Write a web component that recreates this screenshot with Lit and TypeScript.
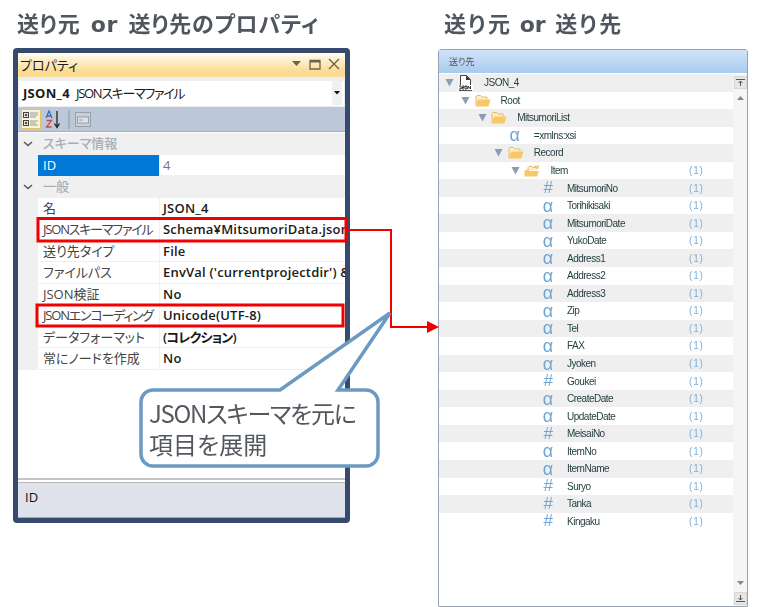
import { LitElement, html, css, svg } from "lit";
import { customElement } from "lit/decorators.js";

type Node = { name: string; level: number; kind: "json" | "folder" | "open" | "a" | "n"; count?: boolean };

const leaf = (name: string, kind: "a" | "n"): Node => ({ name, level: 5, kind, count: true });
const nodes: Node[] = [
  { name: "JSON_4", level: 0, kind: "json" },
  { name: "Root", level: 1, kind: "folder" },
  { name: "MitsumoriList", level: 2, kind: "folder" },
  { name: "=xmlns:xsi", level: 3, kind: "a" },
  { name: "Record", level: 3, kind: "folder" },
  { name: "Item", level: 4, kind: "open", count: true },
  leaf("MitsumoriNo", "n"), leaf("Torihikisaki", "a"), leaf("MitsumoriDate", "a"), leaf("YukoDate", "a"),
  leaf("Address1", "a"), leaf("Address2", "a"), leaf("Address3", "a"), leaf("Zip", "a"), leaf("Tel", "a"),
  leaf("FAX", "a"), leaf("Jyoken", "a"), leaf("Goukei", "n"), leaf("CreateDate", "a"), leaf("UpdateDate", "a"),
  leaf("MeisaiNo", "n"), leaf("ItemNo", "a"), leaf("ItemName", "a"), leaf("Suryo", "n"), leaf("Tanka", "n"), leaf("Kingaku", "n"),
];

const props: { k: string; v: string; tightK?: boolean; tightV?: boolean }[] = [
  { k: "名", v: "JSON_4" },
  { k: "JSONスキーマファイル", v: "Schema¥MitsumoriData.json", tightK: true },
  { k: "送り先タイプ", v: "File" },
  { k: "ファイルパス", v: "EnvVal ('currentprojectdir') & '¥Mits" },
  { k: "JSON検証", v: "No" },
  { k: "JSONエンコーディング", v: "Unicode(UTF-8)", tightK: true },
  { k: "データフォーマット", v: "(コレクション)", tightV: true },
  { k: "常にノードを作成", v: "No" },
];

const chevron = html`<svg class="chev" width="10" height="6" viewBox="0 0 10 6"><path d="M1 1l4 3.5L9 1" fill="none" stroke="#555" stroke-width="1.5"/></svg>`;

const folder = html`<svg width="16" height="13" viewBox="0 0 16 13"><path d="M1 12V2.5L2 1.500h3.500L7 3h5v2" fill="#fbeecb" stroke="#e9b85a"/><path d="M.8 12.500L3 5.500h12.500L13.500 12.500z" fill="#f6c868"/></svg>`;
const openFolder = html`<svg width="16" height="13" viewBox="0 0 16 13"><path d="M4 7V3.500L5 2.500h3l1 1h4v2" fill="#fbeecb" stroke="#e9b85a"/><path d="M9 2l6.500-.5L14 5z" fill="#f6c868"/><path d="M.5 12.500V7l1-1h3l1 1h9.500L13 12.500z" fill="#f6c868"/></svg>`;
const jsonFile = html`<svg width="15" height="16" viewBox="0 0 15 16"><path d="M2.500.5h6l4 4v6h-10z" fill="#fff" stroke="#444"/><path d="M8 .5v4.500h4.500z" fill="#333"/><rect x="0" y="10" width="15" height="5.500" fill="#fff"/><path d="M1 11h2v3H1M4 11h2v1.500H4V14h2M7 11h2v3H7zM10 14v-3l2.500 3v-3" fill="none" stroke="#222" stroke-width=".9"/><rect x="1" y="15" width="13" height="1" fill="#555"/></svg>`;

@customElement("app-root")
export class AppRoot extends LitElement {
  static styles = css`
    :host {
      display: block;
      width: 767px;
      height: 607px;
      position: relative;
      overflow: hidden;
      background: #fff;
      font-family: "Open Sans", "Noto Sans CJK JP", sans-serif;
      font-feature-settings: "palt";
    }
    .page { display: flex; align-items: flex-start; filter: blur(0.3px); }
    .left { width: 337px; margin-left: 13px; }
    .right { width: 310px; margin-left: 88px; }
    h1 {
      margin: 0;
      height: 48px;
      padding-top: 9px;
      box-sizing: border-box;
      font: 700 22px/32px "DejaVu Sans", "Noto Sans CJK JP", sans-serif;
      font-feature-settings: "palt";
      color: #50565e;
      white-space: pre;
      word-spacing: 2px;
    }
    .left h1 { margin-left: 4px; letter-spacing: 0.7px; }
    .right h1 { height: 49px; margin-left: 6px; font-feature-settings: normal; }

    .win {
      height: 475px;
      box-sizing: border-box;
      border: 5px solid #364a6d;
      border-radius: 4px;
      background: #fff;
      display: flex;
      flex-direction: column;
      overflow: hidden;
    }
    .wtitle {
      height: 24px;
      flex: none;
      background: linear-gradient(#fffdf2, #fbdc94 75%);
      display: flex;
      align-items: center;
      padding: 0 5px 2px 2px;
      box-sizing: border-box;
      font-size: 13px;
      color: #1b1b1b;
    }
    .wtitle span { flex: 1; }
    .wtitle svg { display: block; margin-left: 7px; }
    .combo-area { height: 30px; flex: none; background: #eceef1; padding: 4px 1px 1px; box-sizing: border-box; }
    .combo {
      height: 25px;
      box-sizing: border-box;
      padding: 0 0 2px 4px;
      background: #fff;
      display: flex;
      align-items: center;
      font-size: 13px;
      color: #1b1b1b;
      white-space: nowrap;
    }
    .combo b { font-weight: 700; margin-right: 6px; letter-spacing: 0.3px; }
    .combo span { flex: 1; letter-spacing: -1.3px; }
    .combo i { width: 10px; height: 24px; background: #f0f0f0; margin-right: 2px; display: flex; align-items: center; justify-content: center; }
    .tool {
      height: 25px;
      flex: none;
      background: #bcc7d8;
      display: flex;
      align-items: center;
      padding-left: 3px;
      border-bottom: 1px solid #a9afb8;
      box-sizing: border-box;
    }
    .tool .on { width: 20px; height: 20px; background: #fff3cf; border: 1px solid #e5c365; box-sizing: border-box; display: flex; align-items: center; justify-content: center; }
    .tool .az { margin-left: 4px; display: block; }
    .tool .sep { width: 2px; height: 19px; background: #a5afbd; margin: 0 5px 0 6px; }
    .grid { height: 348px; flex: none; display: flex; flex-direction: column; background: #fff; padding-top: 1px; box-sizing: border-box; border-bottom: 2px solid #c4c4c4; }
    .row { height: 21.5px; flex: none; display: grid; grid-template-columns: 20px 121px 1fr; align-items: stretch; font-size: 13px; line-height: 21px; white-space: nowrap; overflow: hidden; }
    .gut { background: #f0f0f0; display: flex; align-items: center; justify-content: center; }
    .name { padding-left: 5px; color: #444; border-bottom: 1px solid #f0f0f0; overflow: hidden; }
    .val { padding-left: 3px; border-left: 1px solid #f0f0f0; border-bottom: 1px solid #f0f0f0; color: #1a1a1a; font-weight: 600; letter-spacing: 0.2px; overflow: hidden; }
    .name.tight { letter-spacing: -1.2px; }
    .val.tightv { letter-spacing: -0.8px; }
    .cat { background: #f0f0f0; grid-template-columns: 20px 1fr; }
    .cat .title { padding-left: 5px; color: #a9aeb5; font-weight: 500; }
    .sel { background: #0078d7; color: #fff; border-bottom-color: #0078d7; }
    .dim { color: #777; font-weight: 400; }
    .desc { flex: 1; margin-top: 2px; background: #dfe2ea; border-top: 1px solid #b9b9b9; border-bottom: 1px solid #a8a8a8; padding: 4px 7px; font-size: 13px; line-height: 20px; color: #111; }

    .panel {
      height: 558px;
      box-sizing: border-box;
      border: 1px solid #98a3b1;
      border-radius: 3px 3px 0 0;
      display: flex;
      flex-direction: column;
      background: #fff;
    }
    .phead {
      height: 23px;
      flex: none;
      background: linear-gradient(#cfe3f8, #a9cbee);
      font-size: 9px;
      line-height: 23px;
      padding-left: 10px;
      color: #555;
    }
    .pbody { flex: 1; display: flex; padding-top: 1px; min-height: 0; }
    .tree { flex: 1; min-width: 0; }
    .node { height: 17.56px; display: grid; grid-template-columns: 1fr 44px; align-items: center; font-family: "Liberation Sans", sans-serif; font-size: 10px; letter-spacing: -0.5px; color: #243f42; }
    .node:nth-child(odd) { background: #efefef; }
    .cell { display: flex; align-items: center; height: 100%; }
    .tri { width: 9px; flex: none; display: flex; justify-content: center; }
    .ico { width: 26px; margin-left: 4.5px; flex: none; display: flex; align-items: center; height: 100%; }
    .glyph { color: #6fa6d6; width: 14px; text-align: center; letter-spacing: 0; }
    .alpha { font: 18px/14px "Liberation Sans", sans-serif; }
    .hash { font: italic 400 17px/14px "Liberation Sans", sans-serif; }
    .cnt { color: #7db0da; letter-spacing: 0.8px; }
    .scroll { width: 14px; flex: none; background: #f5f5f5; display: flex; flex-direction: column; align-items: center; padding: 2px 0 1px; box-sizing: border-box; }
    .sbtn { width: 13px; height: 13px; background: #e6e6e6; border: 1px solid #d6d6d6; box-sizing: border-box; display: flex; align-items: center; justify-content: center; }
    .smid { flex: 1; display: flex; flex-direction: column; justify-content: space-between; align-items: center; padding: 7px 0; }

    .overlay { position: absolute; inset: 0; pointer-events: none; filter: blur(0.3px); }
    .say {
      position: absolute;
      left: 149px;
      top: 398px;
      font: 400 24px/30.500px "Noto Sans CJK JP", sans-serif;
      font-feature-settings: "palt";
      color: #53585f;
      white-space: pre;
      filter: blur(0.3px);
    }
    .say span { letter-spacing: -1.3px; }
  `;

  private icon(n: Node) {
    if (n.kind === "json") return jsonFile;
    if (n.kind === "folder") return folder;
    if (n.kind === "open") return openFolder;
    if (n.kind === "a") return html`<span class="glyph alpha">α</span>`;
    return html`<span class="glyph hash">#</span>`;
  }

  private node(n: Node) {
    const hasTri = n.kind === "json" || n.kind === "folder" || n.kind === "open";
    return html`<div class="node">
      <div class="cell" style="padding-left:${5.5 + n.level * 16.6}px">
        <span class="tri">${hasTri
          ? html`<svg width="9" height="9" viewBox="0 0 9 9"><path d="M.5 1h8L4.500 8.500z" fill="#8a9cb6"/></svg>`
          : ""}</span>
        <span class="ico">${this.icon(n)}</span>
        <span>${n.name}</span>
      </div>
      <span class="cnt">${n.count ? "(1)" : ""}</span>
    </div>`;
  }

  render() {
    return html`
      <div class="page">
        <section class="left">
          <h1>送り元 or 送り先のプロパティ</h1>
          <div class="win">
            <div class="wtitle">
              <span>プロパティ</span>
              <svg width="11" height="6" viewBox="0 0 11 6"><path d="M1 0h9L5.500 5z" fill="#6b644e"/></svg>
              <svg width="12" height="11" viewBox="0 0 12 11"><path d="M1 1.500h10V10H1z" fill="none" stroke="#6b644e" stroke-width="1.300"/><rect x="1" y="1" width="10" height="2.500" fill="#6b644e"/></svg>
              <svg width="12" height="12" viewBox="0 0 12 12"><path d="M1 1l10 10M11 1L1 11" stroke="#6b644e" stroke-width="1.400"/></svg>
            </div>
            <div class="combo-area">
              <div class="combo">
                <b>JSON_4</b><span>JSONスキーマファイル</span>
                <i><svg width="6" height="4" viewBox="0 0 6 4"><path d="M0 0h6L3 3.500z" fill="#111"/></svg></i>
              </div>
            </div>
            <div class="tool">
              <div class="on">
                <svg width="16" height="16" viewBox="0 0 16 16">
                  <rect x=".5" y="1.500" width="5" height="5" fill="#fff" stroke="#444"/><path d="M1.500 4h3M3 2.500v3" stroke="#222"/>
                  <rect x=".5" y="9.500" width="5" height="5" fill="#fff" stroke="#444"/><path d="M1.500 12h3M3 10.500v3" stroke="#222"/>
                  <path d="M7 2h8M7 4h8M7 6h6M7 10h8M7 12h6M7 14h8" stroke="#8d9bb0"/>
                </svg>
              </div>
              <svg class="az" width="17" height="19" viewBox="0 0 17 19">
                <path d="M1 8l3-7 3 7M2.200 6h3.600" fill="none" stroke="#3b6cc0" stroke-width="1.300"/>
                <path d="M1.500 10.500h5L1.500 17h5" fill="none" stroke="#c0504d" stroke-width="1.300"/>
                <path d="M12 1v16M9.500 13.500L12 17.500l2.500-4" fill="none" stroke="#222" stroke-width="1.300"/>
              </svg>
              <div class="sep"></div>
              <svg width="16" height="15" viewBox="0 0 16 15">
                <rect x=".5" y=".5" width="15" height="14" fill="#c9cfd8" stroke="#98a0ac"/>
                <rect x="2.500" y="5" width="11" height="6" fill="#dde1e7" stroke="#98a0ac"/>
                <path d="M4 8h4" stroke="#98a0ac"/>
              </svg>
            </div>
            <div class="grid">
              <div class="row cat"><div class="gut">${chevron}</div><div class="title">スキーマ情報</div></div>
              <div class="row"><div class="gut"></div><div class="name sel">ID</div><div class="val dim">4</div></div>
              <div class="row cat"><div class="gut">${chevron}</div><div class="title">一般</div></div>
              ${props.map(
                (p) => html`<div class="row"><div class="gut"></div><div class="name ${p.tightK ? "tight" : ""}">${p.k}</div><div class="val ${p.tightV ? "tightv" : ""}">${p.v}</div></div>`
              )}
            </div>
            <div class="desc">ID</div>
          </div>
        </section>
        <section class="right">
          <h1>送り元 or 送り先</h1>
          <div class="panel">
            <div class="phead">送り先</div>
            <div class="pbody">
              <div class="tree">${nodes.map((n) => this.node(n))}</div>
              <div class="scroll">
                <div class="sbtn"><svg width="9" height="7" viewBox="0 0 9 7"><path d="M0 .5h9M4.500 2v5M2.500 4l2-2 2 2" fill="none" stroke="#555"/></svg></div>
                <div class="smid">
                  <svg width="7" height="4" viewBox="0 0 7 4"><path d="M0 4h7L3.500 0z" fill="#888"/></svg>
                  <svg width="7" height="4" viewBox="0 0 7 4"><path d="M0 0h7L3.500 4z" fill="#888"/></svg>
                </div>
                <div class="sbtn"><svg width="9" height="7" viewBox="0 0 9 7"><path d="M0 6.500h9M4.500 0v5M2.500 3l2 2 2-2" fill="none" stroke="#555"/></svg></div>
              </div>
            </div>
          </div>
        </section>
      </div>
      <svg class="overlay" width="767" height="607" viewBox="0 0 767 607">
        ${svg`
          <rect x="38" y="218.500" width="308" height="22.500" fill="none" stroke="#f00000" stroke-width="3"/>
          <rect x="37" y="305" width="306" height="21" fill="none" stroke="#f00000" stroke-width="3"/>
          <path d="M346 230H391V327H428" fill="none" stroke="#f00000" stroke-width="2"/>
          <path d="M427 321l12 6-12 6z" fill="#f00000"/>
          <path d="M153 390H280L390 313L338 390H366a12 12 0 0 1 12 12V454a12 12 0 0 1-12 12H153a12 12 0 0 1-12-12V402a12 12 0 0 1 12-12z" fill="#fff" stroke="#6c9ac3" stroke-width="3.500" stroke-linejoin="miter"/>
        `}
      </svg>
      <div class="say"><span>JSONスキーマを元に</span>
項目を展開</div>
    `;
  }
}
